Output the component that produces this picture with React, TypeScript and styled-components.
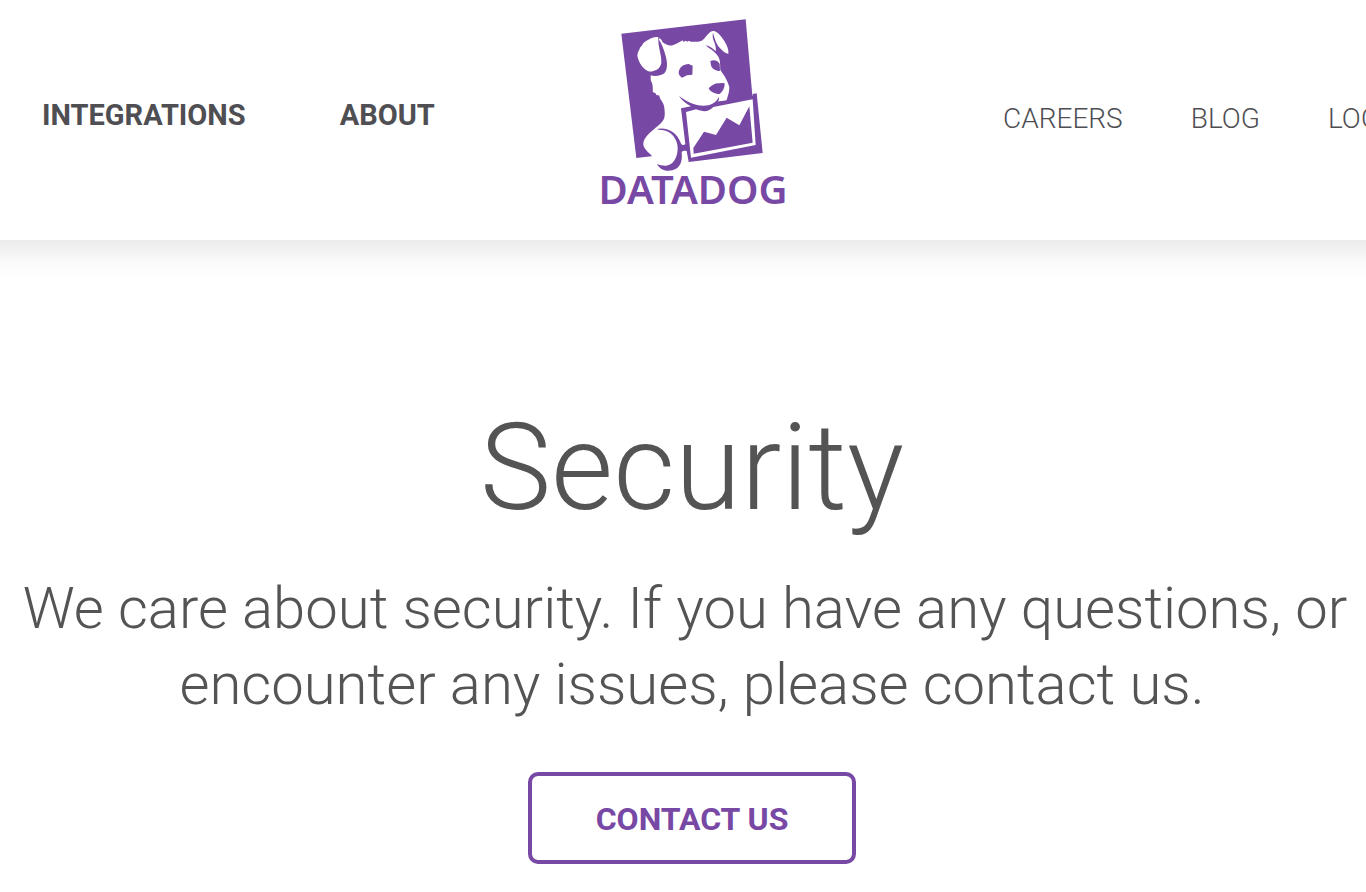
import React from "react";
import styled, { createGlobalStyle } from "styled-components";

const purple = "#7748a4";
const ink = "#545454";

const GlobalStyle = createGlobalStyle`
  *, *::before, *::after { box-sizing: border-box; }
  body {
    margin: 0;
    background: #ffffff;
    color: ${ink};
    font-family: Roboto, "Liberation Sans", sans-serif;
    overflow-x: hidden;
  }
`;

const Header = styled.header`
  display: grid;
  grid-template-columns: 1fr auto 1fr;
  height: 240px;
  padding-left: 20px;
  overflow-x: clip;
  background: #ffffff;
`;

const Nav = styled.nav<{ $side: "left" | "right" }>`
  display: flex;
  min-width: 0;
  white-space: nowrap;
  gap: ${({ $side }) => ($side === "left" ? 94 : 68)}px;
  padding: ${({ $side }) => ($side === "left" ? "98px 0 0 22px" : "102px 0 0 217px")};
`;

const NavLink = styled.a<{ $strong?: boolean }>`
  color: #4e4e53;
  font-size: ${({ $strong }) => ($strong ? 29 : 28)}px;
  font-weight: ${({ $strong }) => ($strong ? 700 : 300)};
  line-height: 34px;
  text-decoration: none;
`;

const Brand = styled.a`
  display: flex;
  flex-direction: column;
  align-items: center;
  width: 186px;
  padding-top: 19px;
  color: ${purple};
  text-decoration: none;
`;

const Mascot = styled.svg`
  display: block;
  width: 186px;
  height: 153px;
`;

const Wordmark = styled.span`
  font-family: "Noto Sans", "Open Sans", sans-serif;
  font-size: 40px;
  font-weight: 600;
  line-height: 34px;
`;

const Hero = styled.main`
  display: flex;
  flex-direction: column;
  align-items: center;
  padding: 160px 0 28px 18px;
  text-align: center;
  background: linear-gradient(#ebebeb, #f3f3f3 12px, #fafafa 21px, #fdfdfd 30px, #ffffff 40px);
`;

const Title = styled.h1`
  margin: 0;
  font-size: 120px;
  font-weight: 300;
  line-height: 136px;
`;

const Lead = styled.p`
  margin: 34px 0 50px;
  font-size: 58px;
  font-weight: 300;
  line-height: 76px;
`;

const ContactButton = styled.button`
  width: 328px;
  height: 92px;
  padding: 2px 0 0;
  border: 4px solid ${purple};
  border-radius: 10px;
  background: transparent;
  color: ${purple};
  font-family: inherit;
  font-size: 32px;
  font-weight: 700;
  cursor: pointer;
`;

function DogLogo() {
  return (
    <Mascot viewBox="30 27 558 459" aria-hidden="true">
      <path fill={purple} d="M94 71 467 28 490 290 300 425 139 444Z" />
      <path
        fill="#fff"
        d="M205 82C192 78 179 86 165 95C159 98 158 105 151 112C147 122 142 128 142 138C146 155 153 168 164 177C172 184 183 187 190 183C203 180 212 171 214 158C215 136 205 113 205 91Z"
      />
      <path
        fill="#fff"
        d="M207 85C213 86 216 92 218 97C228 105 240 109 250 105C260 102 270 95 278 91L280 95 288 92 291 95 298 92 301 95 325 95C339 94 342 86 351 76C357 68 364 62 372 63C383 65 394 79 403 93C412 108 417 121 415 131C406 131 393 119 385 109C377 97 373 83 369 68C367 75 368 87 373 97C376 106 379 116 377 124C369 115 359 108 347 106C356 115 371 121 383 137C392 149 390 164 391 180C402 195 414 214 418 232C418 248 413 260 409 273L382 275 371 292 290 310 293 445 275 480 202 480 185 437C180 430 164 421 160 405C158 382 185 364 207 345C224 330 225 320 224 305C224 286 219 278 211 267L207 256 200 256 196 249 189 247C187 238 190 229 186 219C180 209 183 203 182 196C197 201 216 196 223 190C234 177 232 156 227 138C222 118 215 101 207 89Z"
      />
      <g fill={purple}>
        <path d="M266 187C269 170 280 163 296 162L308 167 307 194 291 196 276 203C269 199 266 194 266 187Z" />
        <path d="M361 153C370 148 385 150 389 162L390 182C379 185 366 177 363 166Z" />
        <path d="M356 235C364 226 374 220 386 220L403 219C406 230 400 242 390 251C378 255 359 244 356 235Z" />
        <path d="M267 258C283 270 299 279 318 284C349 292 376 284 387 260C387 269 386 272 383 275L488 257 488 252 500 250 518 429 296 456 290 423C280 421 276 423 275 428C278 454 271 474 247 481C226 486 209 478 201 462C217 468 237 471 249 457C273 427 267 376 227 362C219 359 210 362 200 357C232 350 261 368 271 396C275 406 278 407 286 403L273 295 303 289C288 281 275 271 267 258Z" />
      </g>
      <path
        fill="#fff"
        d="M288 306 318 298C342 307 357 305 370 291L488 268 497 405 303 443Z"
      />
      <path
        fill={purple}
        d="M310 414 342 365 378 375 410 323 448 346 478 289 488 398 311 431Z"
      />
    </Mascot>
  );
}

export default function App() {
  return (
    <>
      <GlobalStyle />
      <Header>
        <Nav $side="left" aria-label="Product">
          <NavLink href="#integrations" $strong>INTEGRATIONS</NavLink>
          <NavLink href="#about" $strong>ABOUT</NavLink>
        </Nav>
        <Brand href="#home">
          <DogLogo />
          <Wordmark>DATADOG</Wordmark>
        </Brand>
        <Nav $side="right" aria-label="Company">
          <NavLink href="#careers">CAREERS</NavLink>
          <NavLink href="#blog">BLOG</NavLink>
          <NavLink href="#login">LOG IN</NavLink>
        </Nav>
      </Header>
      <Hero>
        <Title>Security</Title>
        <Lead>
          We care about security. If you have any questions, or&nbsp;
          <br />
          encounter any issues, please contact us.
        </Lead>
        <ContactButton type="button">CONTACT US</ContactButton>
      </Hero>
    </>
  );
}
